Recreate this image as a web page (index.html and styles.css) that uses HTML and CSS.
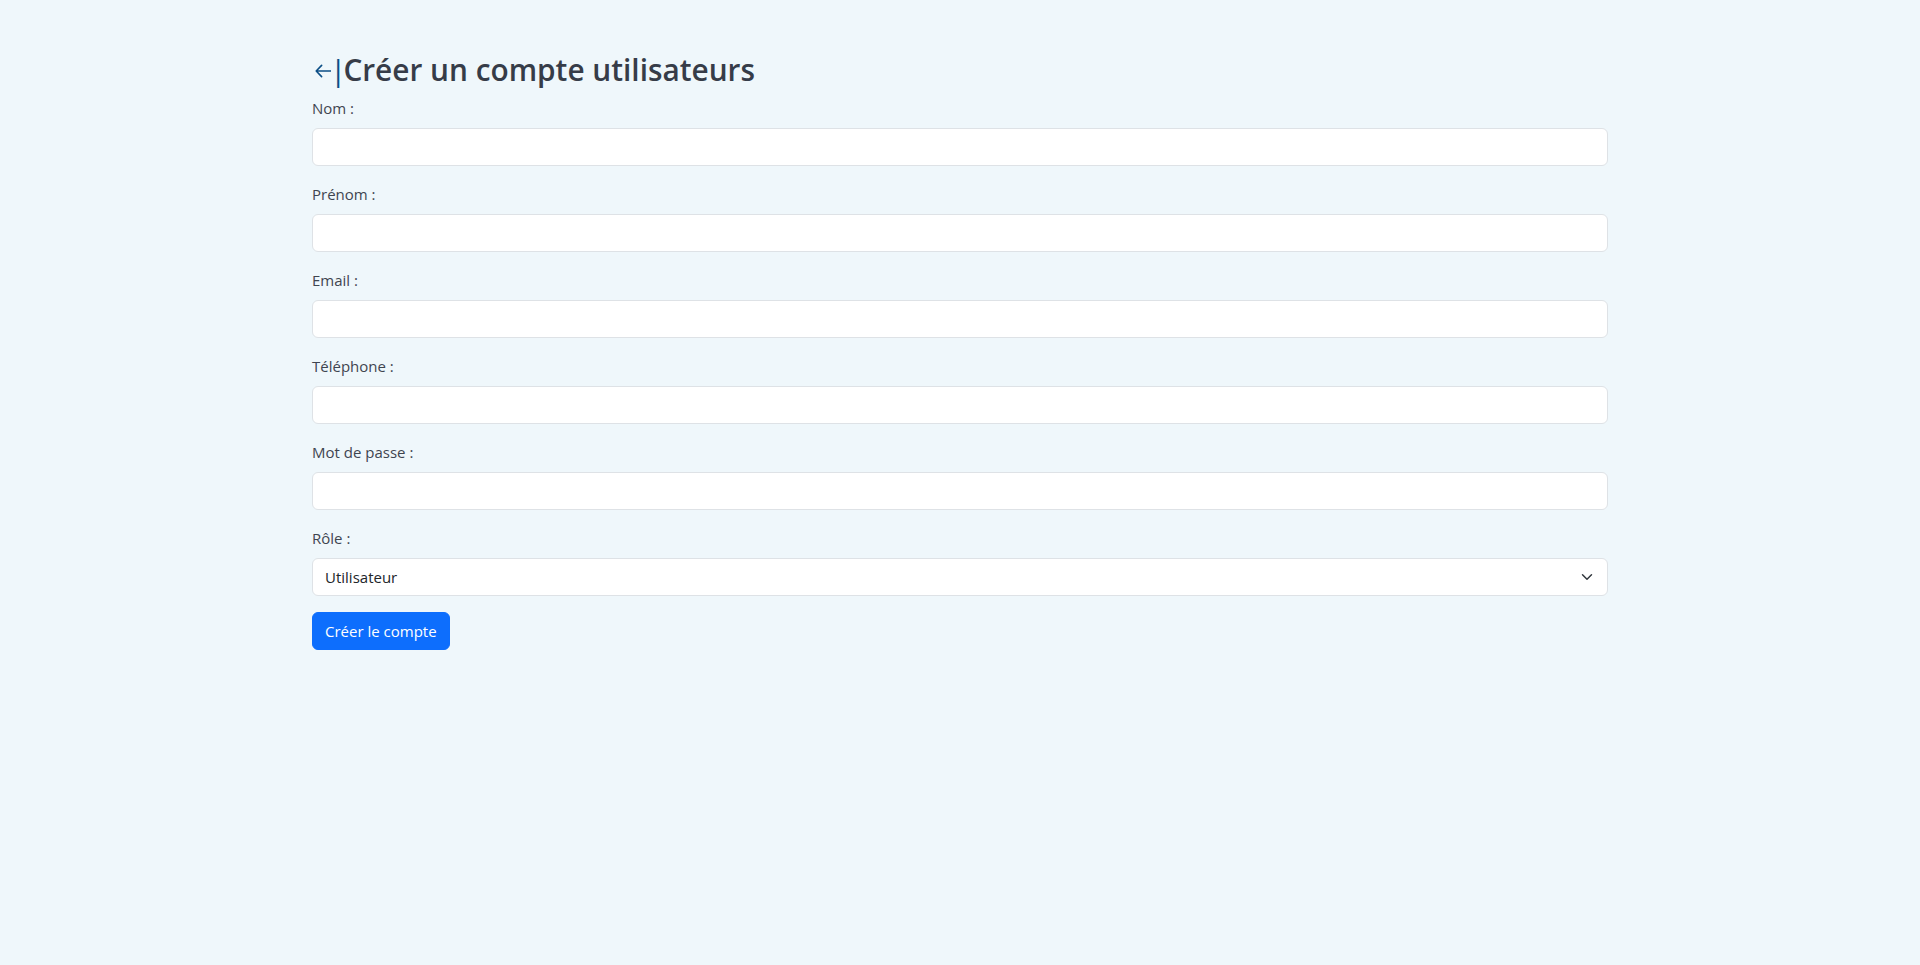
FILE: index.html
```html
<!DOCTYPE html>
<html lang="fr">
<head>
<meta charset="utf-8">
<title>Créer un compte utilisateurs</title>
<link rel="stylesheet" href="styles.css">
</head>
<body>
<main class="container">
  <h2 class="page-title"><a class="back-link" href="#" aria-label="Retour"><svg class="back-arrow" width="16" height="14" viewBox="0 0 16 14" aria-hidden="true"><path d="M15.5 7H1.2M6.6 1.4 1.2 7l5.4 5.6" fill="none" stroke="currentColor" stroke-width="1.6" stroke-linecap="round" stroke-linejoin="round"/></svg><span class="back-bar">|</span></a>Créer un compte utilisateurs</h2>
  <form class="user-form">
    <div class="field">
      <label class="field-label" for="nom">Nom :</label>
      <input class="field-input" id="nom" type="text">
    </div>
    <div class="field">
      <label class="field-label" for="prenom">Prénom :</label>
      <input class="field-input" id="prenom" type="text">
    </div>
    <div class="field">
      <label class="field-label" for="email">Email :</label>
      <input class="field-input" id="email" type="email">
    </div>
    <div class="field">
      <label class="field-label" for="tel">Téléphone :</label>
      <input class="field-input" id="tel" type="tel">
    </div>
    <div class="field">
      <label class="field-label" for="mdp">Mot de passe :</label>
      <input class="field-input" id="mdp" type="password">
    </div>
    <div class="field">
      <label class="field-label" for="role">Rôle :</label>
      <select class="field-input field-select" id="role">
        <option>Utilisateur</option>
        <option>Administrateur</option>
      </select>
    </div>
    <button class="submit-btn" type="submit">Créer le compte</button>
  </form>
</main>
</body>
</html>
```

FILE: styles.css
```css
* { box-sizing: border-box; }

html, body {
  margin: 0;
  background: #eff7fb;
  min-height: 100%;
}

body {
  font-family: "Open Sans", "Noto Sans", sans-serif;
  font-size: 16px;
  line-height: 1.5;
  color: #212529;
}

.container {
  width: 1296px;
  margin: 0 auto;
  padding-top: 52px;
}

.page-title {
  margin: 0 0 8px;
  font-size: 29.8px;
  font-weight: 600;
  line-height: 36px;
  color: #363c48;
}

.back-link {
  color: #0c4f86;
  text-decoration: none;
}

.back-arrow {
  display: inline-block;
  vertical-align: 3px;
  margin-left: 3px;
}

.back-bar {
  font-weight: 400;
  margin-left: -1px;
  margin-right: -3px;
}

.user-form {
  display: flex;
  flex-direction: column;
  align-items: flex-start;
}

.field {
  width: 100%;
  margin-bottom: 16px;
  display: flex;
  flex-direction: column;
}

.field-label {
  display: block;
  line-height: 24px;
  margin-bottom: 8px;
  font-size: 15px;
  color: #3f4550;
}

.field-input {
  display: block;
  width: 100%;
  height: 38px;
  padding: 6px 12px;
  font-family: inherit;
  font-size: 15px;
  line-height: 24px;
  color: #212529;
  background: #fff;
  border: 1px solid #dee2e6;
  border-radius: 6px;
  outline: none;
}

.field-select {
  appearance: none;
  -webkit-appearance: none;
  padding-right: 36px;
  background-image: url("data:image/svg+xml,%3csvg xmlns='http://www.w3.org/2000/svg' viewBox='0 0 16 16'%3e%3cpath fill='none' stroke='%23343a40' stroke-linecap='round' stroke-linejoin='round' stroke-width='2' d='m2 5 6 6 6-6'/%3e%3c/svg%3e");
  background-repeat: no-repeat;
  background-position: right 12px center;
  background-size: 16px 12px;
}

.submit-btn {
  height: 38px;
  padding: 6px 12px;
  font-family: inherit;
  font-size: 15px;
  line-height: 24px;
  color: #fff;
  background: #0d6efd;
  border: 1px solid #0d6efd;
  border-radius: 6px;
  cursor: pointer;
}
```
